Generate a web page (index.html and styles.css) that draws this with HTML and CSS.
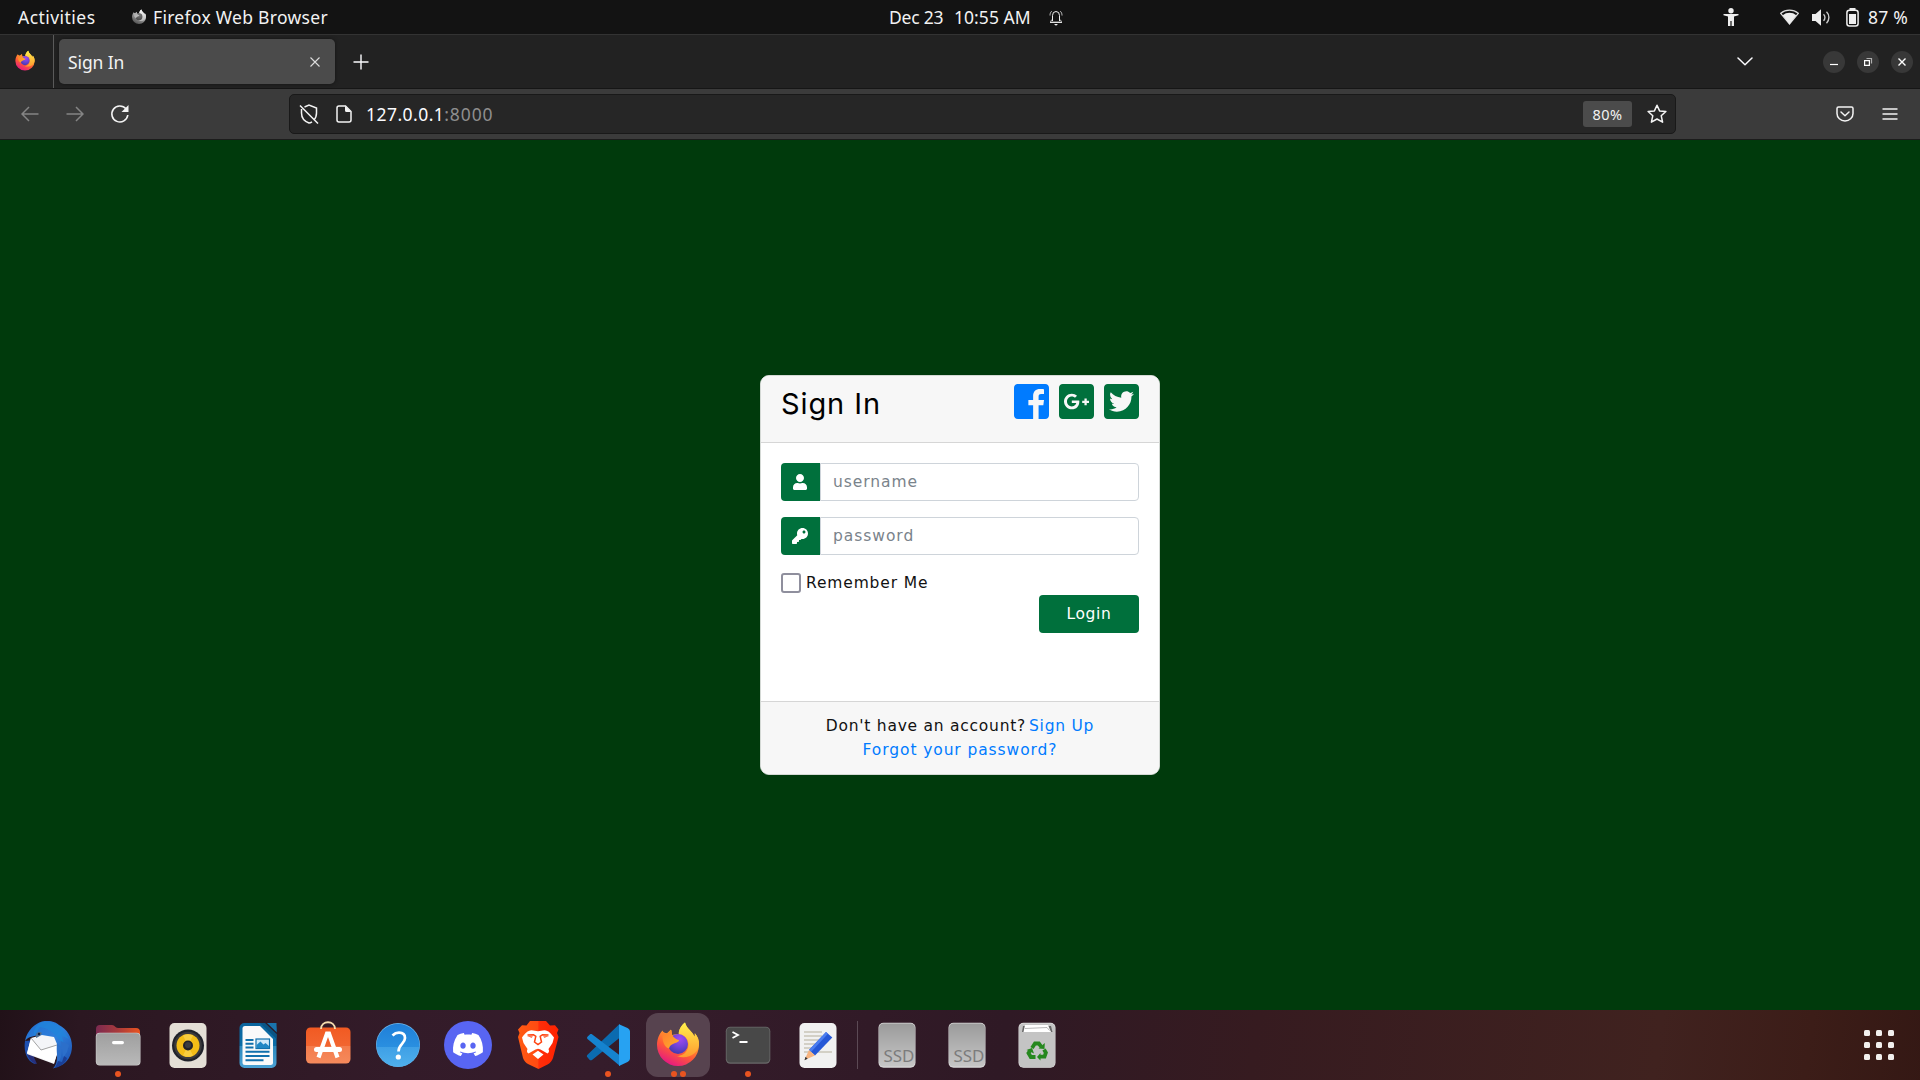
FILE: index.html
```html
<!DOCTYPE html>
<html lang="en">
<head>
<meta charset="utf-8">
<title>Sign In</title>
<link rel="stylesheet" href="styles.css">
</head>
<body>
<svg class="defs" width="0" height="0" aria-hidden="true">
  <defs>
    <linearGradient id="flame" x1="0.8" y1="0" x2="0.3" y2="1"><stop offset="0" stop-color="#fff44f"/><stop offset=".35" stop-color="#ffa42a"/><stop offset=".65" stop-color="#ff5a36"/><stop offset="1" stop-color="#e31587"/></linearGradient>
    <radialGradient id="globe" cx=".6" cy=".25" r=".8"><stop offset="0" stop-color="#a14bf0"/><stop offset=".5" stop-color="#7043d8"/><stop offset="1" stop-color="#3f3aa8"/></radialGradient>
    <linearGradient id="ear" x1="0" y1="0" x2="1" y2="1"><stop offset="0" stop-color="#ff7a2e"/><stop offset="1" stop-color="#ffb02c"/></linearGradient>
    <linearGradient id="tail" x1="0" y1="0" x2="0" y2="1"><stop offset="0" stop-color="#fff04c"/><stop offset="1" stop-color="#ff9a2f"/></linearGradient>
    <linearGradient id="bird" x1="0" y1="0" x2="1" y2="1"><stop offset="0" stop-color="#1f6fd0"/><stop offset=".5" stop-color="#2f7fdc"/><stop offset="1" stop-color="#1c4fae"/></linearGradient>
    <linearGradient id="steel" x1="0" y1="0" x2="0" y2="1"><stop offset="0" stop-color="#9b9b9b"/><stop offset="1" stop-color="#c6c6c6"/></linearGradient>
    <linearGradient id="folderback" x1="0" y1="0" x2="1" y2="0"><stop offset="0" stop-color="#7b2a50"/><stop offset=".5" stop-color="#a93a3c"/><stop offset="1" stop-color="#e95420"/></linearGradient>
    <linearGradient id="folder" x1="0" y1="0" x2="0" y2="1"><stop offset="0" stop-color="#9f9f9f"/><stop offset="1" stop-color="#b9b9b9"/></linearGradient>
    <linearGradient id="bag" x1="0" y1="0" x2="0" y2="1"><stop offset="0" stop-color="#f15a22"/><stop offset=".5" stop-color="#f26530"/><stop offset=".51" stop-color="#f47c4c"/><stop offset="1" stop-color="#f58a5c"/></linearGradient>
    <linearGradient id="sky" x1="0" y1="0" x2="0" y2="1"><stop offset="0" stop-color="#1f7fd8"/><stop offset=".54" stop-color="#2a8fe0"/><stop offset=".55" stop-color="#3fa0e6"/><stop offset="1" stop-color="#4fb0ec"/></linearGradient>
    <linearGradient id="writer" x1="0" y1="0" x2="0" y2="1"><stop offset="0" stop-color="#0a659e"/><stop offset=".5" stop-color="#0c6ea8"/><stop offset=".51" stop-color="#2b88bd"/><stop offset="1" stop-color="#4aa2d4"/></linearGradient>
    <linearGradient id="lion" x1="0" y1="0" x2="1" y2="0"><stop offset="0" stop-color="#ff5a12"/><stop offset=".5" stop-color="#ff4a12"/><stop offset=".51" stop-color="#ff2e0a"/><stop offset="1" stop-color="#ff2200"/></linearGradient>
    <symbol id="firefox" viewBox="0 0 48 48">
      <path fill="url(#flame)" d="M8.500 9.500C5 13 3 18.500 3 24a21 21 0 0 0 42 0c0-5-1.600-9-4.200-12 .1 1.600.1 2.400-.3 3.500C38.300 9.900 32.700 8 31 1.500c-3.500 2.700-6.300 7-6.200 12-2-.4-4.800-.3-6.800.5L17 8.500l-4 3.700C11 12 9 11.500 8.500 9.500z"/>
      <path fill="url(#tail)" d="M31 1.500c-4 3-6.500 7.500-6.200 11.500 8 1 11.200 8 9.200 14-2 6-7 8-11 8 10 4 21-2 22-11 .4-5-1.300-9-4.200-11.500.1 1.400.1 2.400-.3 3.500C38.300 10.400 32.700 8 31 1.500z"/>
      <circle fill="url(#globe)" cx="24" cy="23" r="10"/>
      <path fill="url(#ear)" d="M8.500 10c1 3.500 3 3 5 2.500L17.500 9l.7 5.500c2.500 2.500 3.800 4 6.800 4.500 0 2-2.500 2.500-4.500 3.200-3 1.200-5 2.500-5.500 5.300-4-1-7.500-6-6.500-17.500z"/>
    </symbol>
    <symbol id="ssd" viewBox="0 0 48 48">
      <rect x="5.500" y="1.800" width="37" height="45" rx="5" fill="#d9d9d9"/><rect x="6" y="2.500" width="36" height="43" rx="4.500" fill="url(#steel)"/>
      <text class="ssd-label" x="10.500" y="40.700" textLength="31" lengthAdjust="spacingAndGlyphs">SSD</text>
    </symbol>
  </defs>
</svg>

<header class="topbar">
  <div class="topbar-left">
    <span class="activities">Activities</span>
    <svg class="gray-fox" width="16" height="16"><use href="#firefox"/></svg>
    <span class="app-name">Firefox Web Browser</span>
  </div>
  <div class="topbar-clock">
    <span class="date">Dec 23</span><span class="time">10:55 AM</span>
    <svg width="14" height="17" viewBox="0 0 14 17" fill="none" stroke="#eee"><path d="M3.500 12V6.500a3.500 4 0 0 1 7 0V12"/><path stroke-width="1.300" d="M1 13.300h12"/><path d="M2.700 2.200C1.300 3.500 1 5 1 6.500M11.300 2.200C12.700 3.500 13 5 13 6.500M1.500 12.500l1.500-2M12.500 12.500l-1.500-2" opacity=".8"/><path d="M5 15h4l-2 1.800z" fill="#eee" stroke="none"/></svg>
  </div>
  <div class="topbar-status">
    <svg width="16" height="18" viewBox="0 0 16 18" fill="#eee"><circle cx="8" cy="2.700" r="2.700"/><path d="M.5 6h15v1.200L11 8.500V18H8.600v-5H7.400v5H5V8.500L.5 7.200z"/></svg>
    <svg class="wifi" width="19" height="16" viewBox="0 0 19 16"><path d="M.7 4.300a14 14 0 0 1 17.600 0L9.500 15z" fill="none" stroke="#ddd" stroke-width="1.200"/><path d="M2.700 6.200a11 11 0 0 1 13.600 0L9.500 15.300z" fill="#eee"/></svg>
    <svg class="volume" width="19" height="17" viewBox="0 0 19 17"><path d="M0 5h3.500L9 .3v16.400L3.500 12H0z" fill="#eee"/><path d="M11.500 5.200a4.500 4.500 0 0 1 0 6.600M14.500 2.800a8 8 0 0 1 0 11.400" fill="none" stroke="#ccc" stroke-width="1.400"/></svg>
    <svg class="battery" width="13" height="19" viewBox="0 0 13 19"><rect x="3.500" y="0" width="6" height="3" fill="#eee"/><rect x=".9" y="2.200" width="11.200" height="15.700" rx="2.500" fill="none" stroke="#eee" stroke-width="1.500"/><rect x="3" y="6" width="7" height="10" fill="#eee"/></svg>
    <span class="percent">87 %</span>
  </div>
</header>

<nav class="tabstrip">
  <div class="view-button"><svg width="22" height="22"><use href="#firefox"/></svg></div>
  <div class="tab">
    <span>Sign In</span>
    <svg width="10" height="10" viewBox="0 0 10 10" stroke="#ddd" stroke-width="1.100"><path d="M.5.5l9 9M9.500.5l-9 9"/></svg>
  </div>
  <svg class="new-tab" width="16" height="16" viewBox="0 0 16 16" stroke="#fbfbfe" stroke-width="1.400"><path d="M8 .5v15M.5 8h15"/></svg>
  <svg class="list-tabs" width="16" height="9" viewBox="0 0 16 9" fill="none" stroke="#fbfbfe" stroke-width="1.500" stroke-linecap="round" stroke-linejoin="round"><path d="M1 1l7 6.800L15 1"/></svg>
  <div class="window-buttons">
    <span><svg width="10" height="10" stroke="#fff" stroke-width="1.200"><path d="M1 7.500h8"/></svg></span>
    <span><svg width="10" height="10" fill="none" stroke="#fff" stroke-width="1.200"><path d="M1.600 3.600h4.800v4.800H1.600z"/><path d="M3.500 1.500h5v5" opacity=".6"/></svg></span>
    <span><svg width="10" height="10" stroke="#fff" stroke-width="1.400"><path d="M1.500 1.500l7 7M8.500 1.500l-7 7"/></svg></span>
  </div>
</nav>

<div class="toolbar">
  <div class="nav-buttons">
    <svg class="dim" width="18" height="16" viewBox="0 0 18 16"><path d="M17.500 8H1M8 1L1 8l7 7"/></svg>
    <svg class="dim" width="18" height="16" viewBox="0 0 18 16"><path d="M.5 8H17M10 1l7 7-7 7"/></svg>
    <svg class="reload" width="20" height="20" viewBox="0 0 20 20"><path stroke-width="1.600" d="M17.800 11A8 8 0 1 1 16 4.800"/><path class="solid" d="M18.500 1v7h-7z"/></svg>
  </div>
  <div class="urlbar">
    <svg width="20" height="20" viewBox="0 0 20 20"><path d="M5.500 3L10 1l7.500 3v5c0 3-1 5.500-2.700 7M13 17.800C12 18.500 11 19 10 19c-4-1.500-7.500-5-7.500-10V5M1 1.500l18 18"/></svg>
    <svg class="page-icon" width="16" height="18" viewBox="0 0 16 18"><path d="M3 1h6.500L15 6.500V15a2 2 0 0 1-2 2H3a2 2 0 0 1-2-2V3a2 2 0 0 1 2-2z"/><path class="solid" d="M9 1l6 6h-4.500A1.500 1.500 0 0 1 9 5.500z"/></svg>
    <span class="host">127.0.0.1<span class="port">:8000</span></span>
    <span class="zoom">80%</span>
    <svg class="star" width="20" height="20" viewBox="0 0 20 20"><path stroke-linejoin="round" d="M10 1.200l2.600 5.700 6.300.6-4.700 4.200 1.400 6.500L10 15l-5.600 3.200 1.400-6.500L1.100 7.500l6.300-.6z"/></svg>
  </div>
  <svg class="pocket" width="18" height="16" viewBox="0 0 18 16"><path stroke-linecap="round" stroke-linejoin="round" d="M2.500 1h13A1.500 1.500 0 0 1 17 2.500v5a8 7.500 0 0 1-16 0v-5A1.500 1.500 0 0 1 2.500 1zM5 6l4 3.700L13 6"/></svg>
  <svg class="menu" width="16" height="14" viewBox="0 0 16 14"><path d="M.5 2h15M.5 7h15M.5 12h15"/></svg>
</div>

<main class="page">
  <section class="card">
    <div class="card-header">
      <h3>Sign In</h3>
      <div class="social">
        <svg class="fb" viewBox="0 32 448 448"><path d="M448 80v352c0 26.500-21.500 48-48 48h-85.300V302.800h60.600l8.700-67.600h-69.300V192c0-19.600 5.400-32.900 33.500-32.900H384V98.700c-6.200-.8-27.400-2.700-52.200-2.700-51.600 0-87 31.500-87 89.400v49.900H184v67.600h60.900V480H48c-26.500 0-48-21.500-48-48V80c0-26.500 21.500-48 48-48h352c26.500 0 48 21.500 48 48z"/></svg>
        <svg viewBox="0 32 448 448"><path d="M400 32H48C21.500 32 0 53.500 0 80v352c0 26.500 21.500 48 48 48h352c26.500 0 48-21.500 48-48V80c0-26.500-21.500-48-48-48zM164 356c-55.300 0-100-44.700-100-100s44.700-100 100-100c27 0 49.500 9.800 67 26.200l-27.100 26.100c-7.400-7.100-20.300-15.400-39.800-15.400-34.100 0-61.900 28.200-61.900 63.200 0 34.900 27.800 63.200 61.900 63.200 39.600 0 54.400-28.500 56.800-43.100H164v-34.400h94.400c1 5 1.600 10.100 1.600 16.600 0 57.100-38.300 97.600-96 97.600zm220-81.800h-29v29h-29.200v-29h-29V245h29v-29H355v29h29v29.200z"/></svg>
        <svg viewBox="0 32 448 448"><path d="M400 32H48C21.500 32 0 53.500 0 80v352c0 26.500 21.500 48 48 48h352c26.500 0 48-21.500 48-48V80c0-26.500-21.500-48-48-48zm-48.900 158.800c.2 2.800.2 5.700.2 8.500 0 86.700-66 186.600-186.600 186.600-37.200 0-71.700-10.800-100.700-29.400 5.300.6 10.400.8 15.800.8 30.700 0 58.900-10.400 81.400-28-28.800-.6-53-19.500-61.300-45.500 10.100 1.500 19.200 1.500 29.600-1.200-30-6.100-52.500-32.500-52.500-64.400v-.8c8.700 4.900 18.900 7.900 29.600 8.300a65.447 65.447 0 0 1-29.200-54.600c0-12.200 3.200-23.400 8.900-33.100 32.300 39.800 80.800 65.800 135.200 68.600-9.300-44.500 24-80.600 64-80.600 18.900 0 35.900 7.900 47.900 20.700 14.800-2.800 29-8.300 41.600-15.800-4.900 15.200-15.200 28-28.800 36.100 13.200-1.400 26-5.100 37.800-10.200-8.900 13.100-20.100 24.700-32.900 34z"/></svg>
      </div>
    </div>
    <form class="card-body">
      <div class="field">
        <span class="addon"><svg width="14" height="16" viewBox="0 0 448 512"><path d="M224 256c70.700 0 128-57.300 128-128S294.700 0 224 0 96 57.300 96 128s57.300 128 128 128zm89.600 32h-16.700c-22.200 10.200-46.900 16-72.900 16s-50.600-5.800-72.900-16h-16.700C60.200 288 0 348.200 0 422.400V464c0 26.500 21.500 48 48 48h352c26.500 0 48-21.500 48-48v-41.600c0-74.200-60.200-134.400-134.400-134.400z"/></svg></span>
        <input type="text" placeholder="username">
      </div>
      <div class="field">
        <span class="addon"><svg width="16" height="16" viewBox="0 0 512 512"><path d="M512 176c0 97.200-78.800 176-176 176-11.200 0-22.200-1.100-32.800-3.100l-24 27a24 24 0 0 1-18 8.100H224v40c0 13.300-10.700 24-24 24h-40v40c0 13.300-10.700 24-24 24H24c-13.300 0-24-10.700-24-24v-78.100c0-6.400 2.500-12.500 7-17l161.800-161.800C163.100 213.800 160 195.300 160 176 160 78.800 238.800 0 336 0c97.500 0 176 78.500 176 176zM336 128c0 26.500 21.500 48 48 48s48-21.500 48-48-21.500-48-48-48-48 21.500-48 48z"/></svg></span>
        <input type="password" placeholder="password">
      </div>
      <label class="remember"><input type="checkbox"><span>Remember Me</span></label>
      <button class="login" type="button">Login</button>
    </form>
    <div class="card-footer">
      <div class="signup">Don't have an account?<a>Sign Up</a></div>
      <div><a>Forgot your password?</a></div>
    </div>
  </section>
</main>

<footer class="dock">
  <div class="app"><svg viewBox="0 0 48 48">
    <path fill="#1d4fb0" d="M1 20C-1 33 5 42 12 43c-3-3-5-7-5-10l4-14z"/>
    <path fill="#27307c" d="M3 33c2 5 5 9 10 10l-4-9z"/>
    <path fill="url(#bird)" d="M1 20C3 9 11 3 18 .5c9-1.500 14 1 17 3.500 8 4 13 12 13 21 0 10-5 16-10 19l-9 3.500c3-3 4-7 4-12l-8-19-11-2C7 15 3 17 1 20z"/>
    <path fill="#1f86dc" d="M18 1c9-1 16 2 21 8l6 9-7-3 2 9-8-9c-5-6-10-8-16-9-2 2-3 6-6 9C9 9 12 4 18 1z" opacity=".7"/>
    <path fill="#f4f5f8" d="M7 17l11-3 12 2 3 7 0 10-3 10L3 33z"/>
    <path fill="#fff" d="M7 17l10 12 17-5-1 9-3 9L3 32z"/>
    <path fill="none" stroke="#999" stroke-width=".9" d="M7 17l10 12 16-5"/>
    <path fill="#2c6fca" d="M33 22l5 5-1 9-4 8c1-8-1-13 0-22zM37 20l8 4-2 7-4 6z"/>
    <path fill="#1a3f97" d="M31 47l3-7 4 1 2-6 3 2c-1 4-5 8-12 10z"/>
    <path fill="#4f6f92" d="M12 13c2-3 5-2 6-1-1 3-4 4-6 5z"/><circle cx="15" cy="13" r="1.200" fill="#13213f"/>
  </svg></div>
  <div class="app"><svg viewBox="0 0 48 48">
    <path fill="url(#folderback)" d="M2 8a4 4 0 0 1 4-4h12c3 0 3 3 6 3h18a4 4 0 0 1 4 4v12H2z"/>
    <rect x="1.800" y="11.800" width="44.700" height="32.700" rx="4" fill="#d0d0d0"/><rect x="2.300" y="12.300" width="43.700" height="31.700" rx="4" fill="url(#folder)"/><rect x="18" y="20" width="12" height="3.200" rx="1.600" fill="#fff"/>
  </svg><i class="dots"><b></b></i></div>
  <div class="app"><svg viewBox="0 0 48 48">
    <rect x="5.500" y="2" width="37" height="45" rx="5" fill="#e4dfd6"/><circle cx="24" cy="24.500" r="16" fill="#20222a"/><circle cx="24" cy="24.500" r="13.800" fill="#3a3a3c"/><circle cx="24" cy="24.500" r="11.500" fill="#f3bd16"/><path d="M24 24.500l-5-10a11 11 0 0 1 10 0zM24 24.500l-5 10a11 11 0 0 0 10 0z" fill="#fbd95a" opacity=".6"/><circle cx="24" cy="24.500" r="5" fill="#222329"/><circle cx="24" cy="24" r="3" fill="#3a3c40"/>
  </svg></div>
  <div class="app"><svg viewBox="0 0 48 48">
    <path fill="url(#writer)" d="M10.500 2H37.500a5 5 0 0 1 5 5V42a5 5 0 0 1-5 5h-27a5 5 0 0 1-5-5V7a5 5 0 0 1 5-5z"/>
    <path fill="#0a5585" d="M26 2h6l10.500 10V18z"/><path fill="#1a74ad" d="M32.500 2H42.500v10z"/><path stroke="#2a1a28" stroke-width="1.200" d="M31.500 1.500l11.500 11"/>
    <path fill="#fafafa" d="M11 5h15l13 13v23.500a2.500 2.500 0 0 1-2.500 2.500H11a2.500 2.500 0 0 1-2.500-2.500V7.500A2.500 2.500 0 0 1 11 5z"/>
    <path stroke="#1170ac" stroke-width="2" d="M11.500 19h8M11.500 22.800h8M11.500 26.600h8M11.500 30.800h24M11.500 35h24M11.500 39.200h18"/>
    <rect x="22" y="18" width="13.500" height="9.500" fill="#cfe8f8" stroke="#1170ac" stroke-width="1.200"/><path fill="#1f86c4" d="M22.500 27v-3l4-3.500 3 3 2-1.500 3.500 3v2z"/>
  </svg></div>
  <div class="app"><svg viewBox="0 0 48 48">
    <rect x="2" y="6.500" width="44.500" height="36" rx="4.500" fill="url(#bag)"/>
    <path fill="none" stroke="#f6dcae" stroke-width="1.800" d="M17 8c0-9 14-9 14 0"/>
    <path fill="none" stroke="#fff" stroke-width="4.200" d="M14.500 36.500L23 12.500h2l8.500 24"/><rect x="10" y="26" width="28" height="5" rx="2.500" fill="#fff"/>
  </svg></div>
  <div class="app"><svg viewBox="0 0 48 48">
    <circle cx="24" cy="24" r="22" fill="#6fb8ec"/><circle cx="24" cy="24.300" r="21.500" fill="url(#sky)"/>
    <path fill="none" stroke="#fff" stroke-width="2.700" d="M18.500 14.500c2-2 4-2.800 6.500-2.800 4 0 6 2 6 5.300 0 6-6.500 6-6.500 13.500"/><circle cx="24.300" cy="36" r="2.600" fill="#fff"/>
  </svg></div>
  <div class="app"><svg viewBox="0 0 48 48">
    <circle cx="24" cy="24" r="24" fill="#5865f2"/>
    <path transform="translate(9 8.500) scale(1.250)" fill="#fff" d="M20.317 4.370a19.791 19.791 0 0 0-4.885-1.515.074.074 0 0 0-.079.037c-.211.375-.445.865-.608 1.250-1.845-.276-3.680-.276-5.487 0-.164-.393-.406-.874-.618-1.250a.077.077 0 0 0-.079-.037 19.736 19.736 0 0 0-4.885 1.515.07.07 0 0 0-.032.028C.533 9.046-.319 13.580.099 18.058a.082.082 0 0 0 .031.056c2.053 1.508 4.041 2.423 5.993 3.029a.078.078 0 0 0 .084-.028c.462-.630.873-1.295 1.226-1.994a.076.076 0 0 0-.042-.106c-.653-.248-1.274-.550-1.872-.892a.077.077 0 0 1-.008-.128c.126-.094.252-.192.372-.291a.074.074 0 0 1 .078-.011c3.928 1.793 8.180 1.793 12.061 0a.074.074 0 0 1 .079.010c.120.099.246.198.373.292a.077.077 0 0 1-.007.128 12.299 12.299 0 0 1-1.873.891.077.077 0 0 0-.041.107c.360.698.772 1.363 1.225 1.993a.076.076 0 0 0 .084.029c1.961-.607 3.950-1.522 6.002-3.029a.077.077 0 0 0 .031-.055c.500-5.177-.838-9.674-3.549-13.660a.061.061 0 0 0-.031-.029zM8.020 15.331c-1.183 0-2.157-1.086-2.157-2.419 0-1.333.956-2.419 2.157-2.419 1.211 0 2.176 1.095 2.157 2.419 0 1.333-.956 2.419-2.157 2.419zm7.975 0c-1.183 0-2.157-1.086-2.157-2.419 0-1.333.955-2.419 2.157-2.419 1.211 0 2.176 1.095 2.157 2.419 0 1.333-.946 2.419-2.157 2.419z"/>
  </svg></div>
  <div class="app"><svg viewBox="0 0 48 48">
    <path fill="url(#lion)" d="M16 0h16l4 4.500 5-.3 3.500 4.300L43 12l1.500 4-5.500 21c-1 3-3 5-5 6.300L24.500 48 14.500 43.300C12 42 10 40 9 37L4 16l1.500-4L4 8.500l4-4.300 4.500.3z"/>
    <path fill="#fff" d="M17.500 9.200L24 10.300l6.500-1.100c4 .3 6.500 3 9.500 7.300l-1.500 5.500-4 6c1 2.500.5 3.500-1 4.500l-7-4-2.500-.7-2.500.7-7 4c-1.500-1-2-2-1-4.500l-4-6L8 16.500c3-4.300 5.500-7 9.500-7.300zM24 29.800l5.500 3.700-5.500 4.500-5.500-4.500z"/>
    <path fill="none" stroke="#ff4310" stroke-width="1.500" d="M13.500 14l6-.3 2.300 1.600-1.300 5.700 3.500 2.500 3.500-2.500-1.300-5.700 2.300-1.600 6 .3"/>
    <path fill="#ff4310" d="M13 15l6 .5-1.500 1.200zM35 15l-6 .5 1.500 1.200z"/>
  </svg></div>
  <div class="app"><svg viewBox="0 0 48 48">
    <path fill="#0b6bb0" d="M35.500 3L36 16.500 8 39c-1 .6-2 .3-2.500-.3L3.200 36c-.5-.8-.4-1.700.3-2.300z"/>
    <path fill="#1583cf" d="M3.500 15.800L5.800 13.500c.7-.6 1.600-.6 2.500 0L36 34.500v10.500L3.500 18c-.6-.7-.6-1.500 0-2.200z"/>
    <path fill="#27a2f2" d="M35 3.200L43.500 7c1.500.7 2.500 2 2.500 3.500v27c0 1.500-1 2.800-2.500 3.500L35 45z"/>
  </svg><i class="dots"><b></b></i></div>
  <div class="app active"><svg viewBox="0 0 48 48"><use href="#firefox"/></svg><i class="dots"><b></b><b></b></i></div>
  <div class="app"><svg viewBox="0 0 48 48">
    <rect x="1.800" y="5.800" width="44.500" height="37" rx="4.500" fill="#6a6a6a"/><rect x="2.600" y="6.600" width="42.900" height="35" rx="4" fill="#484848"/>
    <path fill="none" stroke="#fff" stroke-width="1.800" d="M8.500 11l5.500 3-5.500 3M15.500 21h8"/>
  </svg><i class="dots"><b></b></i></div>
  <div class="app"><svg viewBox="0 0 48 48">
    <rect x="5.500" y="2" width="37" height="45" rx="5" fill="#f1f1f1"/>
    <path stroke="#c9c5b8" stroke-width="1.600" d="M10 11h18M10 15h18M10 19h17M10 23h14M10 27h11M10 31h28"/>
    <path fill="#2557d6" d="M32 11l6.300 5.500L21 34.500l-6-5.500z"/><path fill="#4b7df0" d="M32 11l2 1.800L17 31l-2-2z"/>
    <path fill="#f6b37f" d="M15 29l6 5.500-10.500 4.500z"/><path fill="#333" d="M11.500 35.800l2.200 2-3.200 1.500z"/>
  </svg></div>
  <span class="divider"></span>
  <div class="app"><svg><use href="#ssd"/></svg></div>
  <div class="app"><svg><use href="#ssd"/></svg></div>
  <div class="app"><svg viewBox="0 0 48 48">
    <rect x="5.500" y="1.800" width="37" height="45" rx="5" fill="#e0e0e0"/><rect x="6" y="2.500" width="36" height="43.800" rx="4.500" fill="#c4c4c4"/>
    <path fill="#666" d="M10 5h28l1.500 6H9z"/><path fill="#fff" d="M12 4h23l3 7H10.500z"/><path fill="none" stroke="#999" stroke-width=".7" d="M12 7.500l22-1 2.500 3"/>
    <g fill="none" stroke="#26881e" stroke-width="3.800"><path d="M19 27l3-4.500h3.800l2.400 3.200"/><path d="M31 28.500l1.900 3.200-1.400 4h-5"/><path d="M22.500 36h-4.700l-2.300-4 1.700-2.500"/></g>
    <path fill="#26881e" d="M25.500 27.500l6 .5.300-6zM27.500 32v7.500L24 36zM13.500 29l5.500-2 2 5.500z"/>
  </svg></div>
  <svg class="show-apps" width="30" height="30" viewBox="0 0 30 30" fill="#f2f0ee"><g id="r"><rect width="6" height="6" rx="1.500"/><rect x="12" width="6" height="6" rx="1.500"/><rect x="24" width="6" height="6" rx="1.500"/></g><use href="#r" y="12"/><use href="#r" y="24"/></svg>
</footer>
</body>
</html>
```
FILE: styles.css
```css
* { box-sizing: border-box; }
body {
  margin: 0;
  width: 1920px;
  height: 1080px;
  overflow: hidden;
  display: flex;
  flex-direction: column;
  font-family: "Noto Sans", "Open Sans", sans-serif;
  font-size: 17.5px;
  color: #f2f2f2;
}
svg { display: block; flex: none; }
.defs { position: absolute; }

/* desktop top bar */
.topbar {
  height: 34px;
  background: #131313;
  display: grid;
  grid-template-columns: 889px 1fr auto;
  align-items: center;
  line-height: 34px;
  white-space: pre;
}
.topbar-left, .topbar-clock, .topbar-status { display: flex; align-items: center; height: 34px; }
.topbar-left { padding-left: 18px; }
.activities { letter-spacing: .46px; width: 113px; }
.gray-fox { filter: grayscale(1) brightness(1.1); margin-right: 6px; }
.app-name { letter-spacing: .3px; }
.date { letter-spacing: -.2px; width: 65px; }
.time { letter-spacing: .05px; width: 95px; }
.topbar-status { padding-right: 12px; }
.wifi { margin-left: 41px; }
.volume { margin-left: 13px; }
.battery { margin-left: 15px; margin-right: 9px; }
.percent { letter-spacing: .22px; width: 40px; }

/* tab strip */
.tabstrip {
  height: 55px;
  background: #222;
  border-top: 1px solid #333;
  border-bottom: 1px solid #161616;
  display: flex;
  align-items: center;
}
.view-button {
  width: 54px;
  height: 53px;
  border-right: 1px solid #5a5a5a;
  padding: 15px 0 0 14px;
}
.tab {
  width: 276px;
  height: 45px;
  margin-left: 5px;
  padding: 0 15px 0 9px;
  border-radius: 5px;
  background: #4b4b4b;
  box-shadow: 0 0 4px rgba(0, 0, 0, .45);
  display: flex;
  align-items: center;
  justify-content: space-between;
  letter-spacing: -.1px;
}
.new-tab { margin-left: 18px; }
.list-tabs { margin-left: auto; }
.window-buttons { display: flex; gap: 12px; margin: 0 7px 0 70px; }
.window-buttons span {
  width: 22px;
  height: 22px;
  border-radius: 50%;
  background: #383838;
  display: grid;
  place-items: center;
}

/* navigation toolbar */
.toolbar {
  height: 51px;
  background: #3b3b3b;
  border-bottom: 1px solid #1c1c1c;
  display: flex;
  align-items: center;
}
.toolbar svg { fill: none; stroke: #f4f4f4; stroke-width: 1.5; }
.toolbar .solid { fill: #f4f4f4; stroke: none; }
.nav-buttons { display: flex; align-items: center; gap: 27px; width: 289px; padding-left: 21px; }
.reload { margin-left: -1px; }
.toolbar .dim { stroke: #858585; }
.urlbar {
  width: 1387px;
  height: 40px;
  border: 1px solid #191919;
  border-radius: 5px;
  background: #262626;
  display: flex;
  align-items: center;
  padding: 0 8px 0 9px;
}
.page-icon { margin: 0 14px 0 17px; }
.host { letter-spacing: .46px; color: #fbfbfe; }
.port { letter-spacing: .9px; color: #8e8e8e; }
.zoom {
  margin-left: auto;
  width: 49px;
  height: 26px;
  border-radius: 3px;
  background: #4b4b4b;
  font-size: 14.5px;
  letter-spacing: .4px;
  line-height: 27px;
  text-align: center;
}
.star { margin-left: 15px; }
.pocket { margin-left: 160px; }
.menu { margin-left: 28px; }

/* page */
.page {
  flex: 1;
  background: #003a0c;
  display: flex;
  align-items: center;
  justify-content: center;
  font: 15.5px/24px "DejaVu Sans", sans-serif;
  letter-spacing: .75px;
  color: #111;
}
.card {
  width: 400px;
  height: 400px;
  border: 1px solid #d4d9d5;
  border-radius: 9px;
  background: #fff;
  overflow: hidden;
  display: flex;
  flex-direction: column;
}
.card-header {
  height: 67px;
  padding: 7px 20px 0;
  background: #f7f7f7;
  border-bottom: 1px solid #d6d6d6;
  display: flex;
  justify-content: space-between;
}
.card-header h3 { margin: 4px 0 0; font: 400 29px/34px Inter, sans-serif; letter-spacing: .9px; color: #000; }
.social { display: flex; gap: 10px; padding-top: .5px; }
.social svg { width: 35px; height: 35px; fill: #00703c; }
.social .fb { fill: #007bff; }
.card-body { flex: 1; padding: 20px; display: flex; flex-direction: column; }
.field { display: flex; height: 38px; margin-bottom: 16px; }
.addon { width: 39px; padding-right: 1px; background: #00703c; border-radius: 4px 0 0 4px; display: grid; place-items: center; }
.addon svg { fill: #fff; }
.field input {
  flex: 1;
  min-width: 0;
  border: 1px solid #ced4da;
  border-radius: 0 4px 4px 0;
  padding: 0 12px;
  font: inherit;
  letter-spacing: .95px;
}
.field input::placeholder { color: #7a838b; opacity: 1; }
.remember { display: flex; align-items: center; height: 24px; }
.remember input { appearance: none; width: 20px; height: 20px; margin: 0 5px 0 0; border: 2px solid #8f8f9d; border-radius: 3px; }
.remember span { letter-spacing: .85px; }
.login {
  align-self: flex-end;
  width: 100px;
  height: 38px;
  border: 0;
  border-radius: 4px;
  background: #00703c;
  color: #fff;
  font: inherit;
  letter-spacing: .6px;
  padding: 0;
}
.card-footer {
  height: 73px;
  border-top: 1px solid #d6d6d6;
  background: #f7f7f7;
  padding-top: 12px;
  text-align: center;
}
.card-footer a { color: #007bff; }
.signup a { margin-left: 3px; }
.card-footer div:last-child { letter-spacing: .9px; }

/* dock */
.dock {
  height: 70px;
  background: linear-gradient(97deg, #211118 0, #2b1721 80px, #331b29 400px, #351c2b 600px, #2f1925 1000px, #361b20 1250px, #40221f 1650px, #3c1d18 1800px, #341814 1920px);
  display: flex;
  align-items: center;
  gap: 6px;
  padding: 0 26px 0 16px;
}
.app {
  position: relative;
  width: 64px;
  height: 64px;
  padding: 8px;
  border-radius: 12px;
}
.app svg { width: 48px; height: 48px; }
.active { background: #57434f; }
.dots { position: absolute; left: 0; right: 0; bottom: 0; display: flex; justify-content: center; gap: 3px; }
.dots b { width: 6px; height: 6px; border-radius: 50%; background: #e95420; }
.divider { width: 1px; height: 48px; margin: 0 1px; background: #5c4a55; }
.ssd-label { font: 16px "Noto Sans", sans-serif; fill: #7c7c7c; }
.show-apps { margin-left: auto; }
```
